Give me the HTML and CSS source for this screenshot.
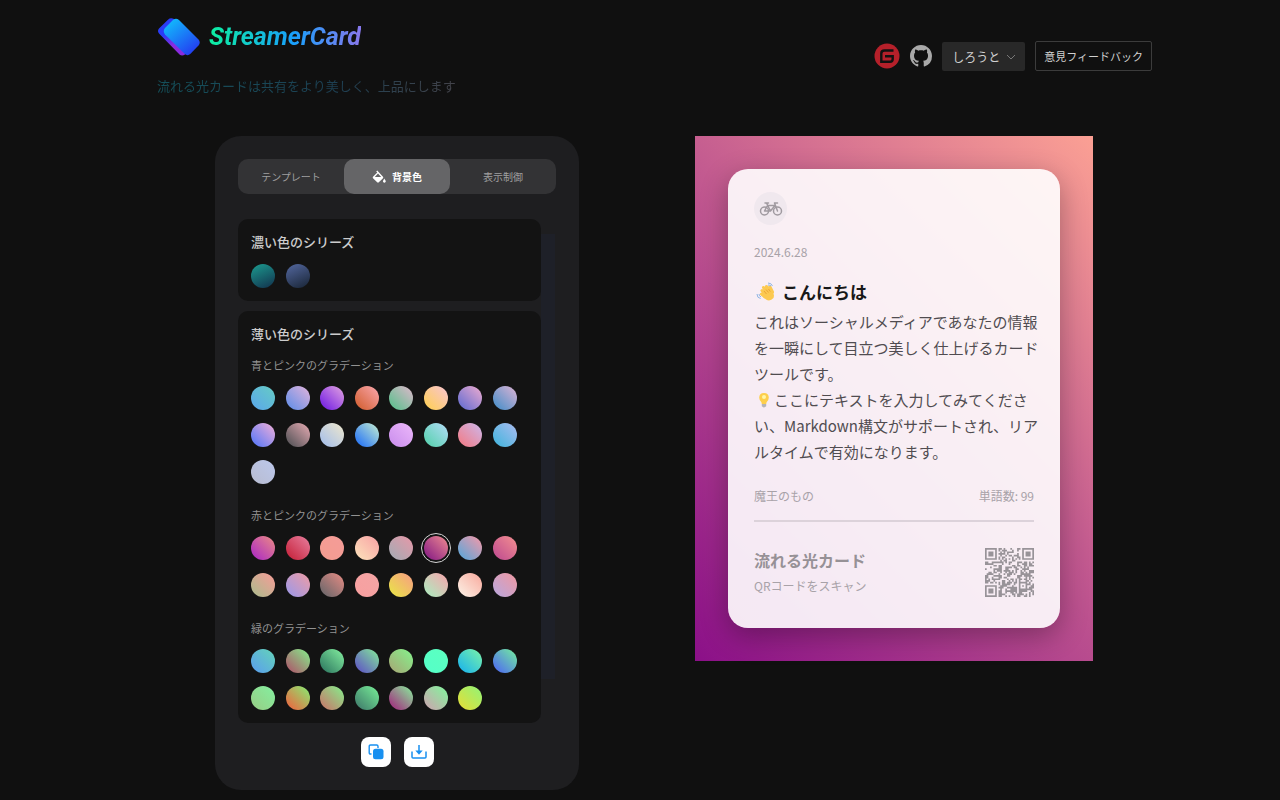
FILE: index.html
```html
<!DOCTYPE html>
<html lang="ja">
<head>
    <meta charset="UTF-8">
    <meta name="viewport" content="width=device-width, initial-scale=1.0">
    <title>StreamerCard</title>
    <link rel="stylesheet" href="styles.css">
</head>
<body>

    <header class="header">
        <div class="brand">
            <div class="brand-row">
                <svg class="logo" viewBox="0 0 44 40" aria-hidden="true">
                    <defs>
                        <linearGradient id="logo-front" x1="0.1" y1="0" x2="0.9" y2="1">
                            <stop offset="0.1" stop-color="#12b4fb"/>
                            <stop offset="0.9" stop-color="#2340f2"/>
                        </linearGradient>
                        <linearGradient id="logo-back" x1="0" y1="0" x2="0.8" y2="1">
                            <stop offset="0.35" stop-color="#2a3cf6"/>
                            <stop offset="0.65" stop-color="#8a2be0"/>
                        </linearGradient>
                    </defs>
                    <path d="M17 2 Q13.500 .3 11 2.800 L2 11.500 Q0 14 2 16.500 L22.500 37.500 Q25 39.500 28 37.500 L36 28 Z" fill="url(#logo-back)"/>
                    <path d="M16 3 Q19 .3 22 3 L41.500 22.500 Q44 25.500 41.500 28.500 L33.500 36.800 Q30.500 39.500 27.500 36.800 L8 17.500 Q5.500 14 8 11 Z" fill="url(#logo-front)"/>
                </svg>
                <h1 class="brand-name">StreamerCard</h1>
            </div>
            <p class="tagline">流れる光カードは共有をより美しく、上品にします</p>
        </div>
        <nav class="actions">
            <a class="icon-link" href="#" aria-label="Gitee">
                <svg viewBox="0 0 26 26" width="26" height="26">
                    <circle cx="13" cy="13" r="12.500" fill="#b5202a"/>
                    <path d="M19.500 7.500 H10.500 Q7.300 7.500 7.300 10.500 V18.700 H16 Q18.700 18.700 18.700 16 V13.200 H11" fill="none" stroke="#111" stroke-width="2.400"/>
                </svg>
            </a>
            <a class="icon-link" href="#" aria-label="GitHub">
                <svg viewBox="0 0 16 16" width="22" height="22">
                    <path fill="#a9a9a9" d="M8 0C3.580 0 0 3.580 0 8c0 3.540 2.290 6.530 5.470 7.590.4.070.55-.17.55-.38 0-.19-.01-.82-.01-1.490-2.010.37-2.530-.49-2.690-.94-.09-.23-.48-.94-.82-1.130-.28-.15-.68-.52-.01-.53.63-.01 1.080.58 1.230.82.72 1.210 1.870.87 2.330.66.070-.52.28-.87.51-1.070-1.780-.2-3.640-.89-3.640-3.950 0-.87.31-1.590.82-2.150-.08-.2-.36-1.020.080-2.120 0 0 .67-.21 2.200.82.64-.18 1.320-.27 2-.27s1.360.090 2 .27c1.530-1.040 2.200-.82 2.200-.82.44 1.100.16 1.920.080 2.120.51.56.82 1.270.82 2.150 0 3.070-1.870 3.750-3.650 3.950.29.25.54.73.54 1.480 0 1.070-.01 1.930-.01 2.200 0 .21.15.46.55.38A8.010 8.010 0 0 0 16 8c0-4.420-3.580-8-8-8z"/>
                </svg>
            </a>
            <div class="select-wrap">
                <select class="select" aria-label="モード">
                    <option>しろうと</option>
                </select>
                <svg class="chevron" viewBox="0 0 10 10" aria-hidden="true"><path d="M1 3 L5 7 L9 3" fill="none" stroke="#777" stroke-width="1"/></svg>
            </div>
            <button class="feedback" type="button">意見フィードバック</button>
        </nav>
    </header>

    <main class="main">
        <section class="panel">
            <div class="tabs" role="tablist">
                <button class="tab" type="button" role="tab">テンプレート</button>
                <button class="tab active" type="button" role="tab" aria-selected="true">
                    <svg viewBox="0 0 14 14" width="14" height="14" aria-hidden="true">
                        <path fill="#fff" fill-rule="evenodd" d="M5.200 0.500 L11 6.800 Q11.600 7.500 11 8.200 L6.800 12.300 Q6 13 5.200 12.300 L1 8.200 Q.4 7.500 1 6.800 L5.300 2.500 L4.200 1.400 Z M6 3.600 L2.800 6.900 H9.200 Z"/>
                        <path fill="#fff" d="M12.300 8.500 Q14 11 13.700 11.800 Q12.400 13.500 11 11.800 Q10.700 11 12.300 8.500Z"/>
                    </svg>
                    背景色
                </button>
                <button class="tab" type="button" role="tab">表示制御</button>
            </div>

            <div class="scroll-area">
                <div class="series-list">
                    <div class="series">
                        <h2 class="series-title">濃い色のシリーズ</h2>
                        <div class="swatches" data-set="dark"></div>
                    </div>
                    <div class="series">
                        <h2 class="series-title">薄い色のシリーズ</h2>
                        <h3 class="series-sub">青とピンクのグラデーション</h3>
                        <div class="swatches" data-set="blue"></div>
                        <h3 class="series-sub">赤とピンクのグラデーション</h3>
                        <div class="swatches" data-set="red"></div>
                        <h3 class="series-sub">緑のグラデーション</h3>
                        <div class="swatches" data-set="green"></div>
                    </div>
                </div>
                <div class="scrollbar" aria-hidden="true"><div class="thumb"></div></div>
            </div>

            <div class="tools">
                <button class="tool" type="button" aria-label="コピー">
                    <svg viewBox="0 0 16 16" width="16" height="16">
                        <path d="M3.500 10 H2.500 Q1.200 10 1.200 8.700 V2.300 Q1.200 1 2.500 1 H8.700 Q10 1 10 2.300 V4" fill="none" stroke="#1890f0" stroke-width="1.400"/>
                        <rect x="5" y="4.800" width="10.500" height="10.500" rx="2.500" fill="#1890f0"/>
                    </svg>
                </button>
                <button class="tool" type="button" aria-label="ダウンロード">
                    <svg viewBox="0 0 16 16" width="16" height="16">
                        <path d="M1 7.500 V13 Q1 14 2 14 H14 Q15 14 15 13 V7.500 M8 1 V7" fill="none" stroke="#1890f0" stroke-width="1.500"/>
                        <path d="M4.300 6.500 H11.700 L8 10.800 Z" fill="#1890f0"/>
                    </svg>
                </button>
            </div>
        </section>

        <section class="preview">
            <article class="card">
                <div class="avatar">
                    <svg viewBox="0 0 24 16" width="24" height="16" aria-hidden="true">
                        <g fill="none" stroke="#a09aa0" stroke-width="1.500" stroke-linecap="round" stroke-linejoin="round">
                            <circle cx="5.500" cy="10" r="4"/>
                            <circle cx="18.500" cy="10" r="4"/>
                            <path d="M5.500 10 L8.500 4.500 H16 L11.500 10 Z M11.500 10 L7.500 2 M6 2 H9.500 M18.500 10 L15.500 2 H18.500"/>
                        </g>
                    </svg>
                </div>
                <time class="date">2024.6.28</time>
                <h2 class="card-title">
                    <svg class="emoji" viewBox="0 0 20 20" aria-hidden="true">
                        <g stroke="#fcc950" stroke-width="3" stroke-linecap="round">
                            <path d="M6 8.500 L11 14 M7.500 5.500 L13 12 M10.500 4.500 L15 10.500 M14 5 L16.500 10 M5.500 12 L9 15"/>
                        </g>
                        <path d="M7 11 L15.500 6.500 Q19 12 17.500 16 Q14 20 10 17.500 L5.500 13Z" fill="#fcc950"/>
                        <path d="M8 9 L10.500 12 M10 7.500 L12.500 10.500 M12.500 7 L14.300 9.500" stroke="#e69a35" stroke-width=".8"/>
                        <path d="M1 12 Q1 16 4.500 16.500 M3 12 Q3 14 5 15 M12 1 Q15.500 1 16.500 4 M12 3 Q14 3 15 4" fill="none" stroke="#8fb5e4" stroke-width="1"/>
                    </svg>
                    こんにちは
                </h2>
                <div class="card-text">
                    <p>これはソーシャルメディアであなたの情報を一瞬にして目立つ美しく仕上げるカードツールです。</p>
                    <p><svg class="emoji" viewBox="0 0 20 20" aria-hidden="true">
                        <path d="M10 3 Q14.800 3 14.800 7.700 Q14.800 10 12.600 12.300 L12.200 14 H7.800 L7.400 12.300 Q5.200 10 5.200 7.700 Q5.200 3 10 3Z" fill="#fdcf4c"/>
                        <circle cx="10" cy="7" r="2" fill="#fff6a8"/>
                        <path d="M7.800 14 H12.200 V16.300 Q10 18.500 7.800 16.300Z" fill="#b4b4b8"/>
                    </svg>ここにテキストを入力してみてください、Markdown構文がサポートされ、リアルタイムで有効になります。</p>
                </div>
                <div class="meta">
                    <span>魔王のもの</span>
                    <span>単語数: 99</span>
                </div>
                <footer class="card-footer">
                    <div>
                        <h3 class="footer-title">流れる光カード</h3>
                        <p class="footer-note">QRコードをスキャン</p>
                    </div>
                    <svg class="qr" viewBox="0 0 29 29" role="img" aria-label="QRコード"><path id="qr-path" fill="#989398"/></svg>
                </footer>
            </article>
        </section>
    </main>

    <script src="script.js"></script>
</body>
</html>
```

FILE: styles.css
```css
* {
    box-sizing: border-box;
}

body {
    margin: 0;
    min-height: 100vh;
    background: #101010;
    color: #ccc;
    font-family: "Noto Sans CJK JP", sans-serif;
}

h1, h2, h3, p {
    margin: 0;
}

button, select {
    font-family: inherit;
    cursor: pointer;
}

/* Header */
.header {
    display: flex;
    justify-content: space-between;
    align-items: center;
    padding: 16px 10% 0;
}

.brand {
    padding-left: 29px;
}

.brand-row {
    display: flex;
    align-items: center;
    gap: 8px;
    height: 42px;
}

.logo {
    width: 44px;
    height: 40px;
}

.brand-name {
    font-family: "Liberation Sans Narrow", Roboto, sans-serif;
    font-size: 25px;
    font-style: italic;
    font-weight: 700;
    line-height: 42px;
    color: transparent;
    background: linear-gradient(90deg, #0df0a0, #18a0fb 55%, #8878ec);
    -webkit-background-clip: text;
    background-clip: text;
}

.tagline {
    margin-top: 18px;
    font-size: 13px;
    line-height: 20px;
    color: transparent;
    background: linear-gradient(90deg, #14505a, #1d3f52 60%, #43434a);
    -webkit-background-clip: text;
    background-clip: text;
}

.actions {
    display: flex;
    align-items: center;
    gap: 10px;
}

.icon-link {
    display: flex;
}

.select-wrap {
    position: relative;
    display: flex;
}

.select {
    appearance: none;
    width: 83px;
    height: 29px;
    padding: 0 10px;
    border: 0;
    border-radius: 2px;
    background: #282828;
    color: #d0d0d0;
    font-size: 12px;
}

.chevron {
    position: absolute;
    top: 10px;
    right: 9px;
    width: 10px;
    height: 10px;
    pointer-events: none;
}

.feedback {
    height: 30px;
    padding: 0 8px;
    border: 1px solid #3c3c3c;
    border-radius: 2px;
    background: #101010;
    color: #d0d0d0;
    font-size: 11px;
}

/* Main */
.main {
    display: flex;
    justify-content: center;
    align-items: flex-start;
    gap: 116px;
    padding: 40px 100px 10px 128px;
}

.panel {
    width: 364px;
    padding: 23px;
    border-radius: 26px;
    background: #1e1e20;
}

.tabs {
    display: flex;
    border-radius: 10px;
    background: #333335;
}

.tab {
    display: flex;
    flex: 1;
    justify-content: center;
    align-items: center;
    gap: 6px;
    height: 35px;
    padding: 0;
    border: 0;
    border-radius: 10px;
    background: none;
    color: #a0a0a0;
    font-size: 10px;
}

.tab.active {
    background: #656567;
    color: #fff;
    font-weight: 700;
}

.scroll-area {
    display: flex;
    margin-top: 25px;
}

.series-list {
    flex: 1;
}

.series {
    padding: 13px;
    border-radius: 10px;
    background: #131313;
}

.series + .series {
    margin-top: 10px;
}

.series-title {
    color: #ccc;
    font-size: 13px;
    font-weight: 500;
    line-height: 20px;
}

.series-sub {
    margin: 23px 0 13px;
    color: #929292;
    font-size: 11px;
    font-weight: 400;
    line-height: 16px;
}

.series-title + .series-sub {
    margin-top: 13px;
}

.swatches {
    display: grid;
    grid-template-columns: repeat(8, 24px);
    justify-content: space-between;
    row-gap: 13px;
    padding-right: 11px;
}

.series-title + .swatches {
    margin-top: 12px;
}

.swatch {
    width: 24px;
    height: 24px;
    padding: 0;
    border: 0;
    border-radius: 50%;
}

.swatch.selected {
    outline: 1px solid #d4d4d4;
    outline-offset: 2px;
}

.scrollbar {
    width: 15px;
    padding: 15px 1px 44px 0;
}

.thumb {
    height: 100%;
    background: #1e2028;
}

.tools {
    display: flex;
    justify-content: center;
    gap: 13px;
    margin-top: 14px;
}

.tool {
    display: flex;
    justify-content: center;
    align-items: center;
    width: 30px;
    height: 30px;
    padding: 0;
    border: 0;
    border-radius: 8px;
    background: #fff;
}

/* Card preview */
.preview {
    width: 398px;
    padding: 33px;
    background: linear-gradient(45deg, #8b1088, #c45c90 55%, #fba094);
}

.card {
    padding: 23px 26px 30px;
    border-radius: 20px;
    background: rgba(255, 255, 255, 0.9);
    box-shadow: 0 8px 28px rgba(0, 0, 0, 0.3);
}

.avatar {
    display: flex;
    justify-content: center;
    align-items: center;
    width: 33px;
    height: 33px;
    border-radius: 50%;
    background: #f0e8ee;
}

.date {
    display: block;
    margin-top: 17px;
    color: #a8a2a8;
    font-size: 12px;
    line-height: 20px;
}

.card-title {
    display: flex;
    align-items: center;
    gap: 6px;
    margin-top: 17px;
    padding-left: 2px;
    color: #181818;
    font-size: 17px;
    font-weight: 700;
    line-height: 26px;
}

.emoji {
    width: 20px;
    height: 20px;
}

/* The body copy runs a little wider than the rows under it */
.card-text {
    margin: 4px -8px 0 0;
    color: #504c50;
    font-size: 15px;
    line-height: 26px;
}

.card-text .emoji {
    vertical-align: -4px;
}

.meta {
    display: flex;
    justify-content: space-between;
    margin-top: 21px;
    padding-bottom: 14px;
    border-bottom: 2px solid #dcd2da;
    color: #a8a2a8;
    font-size: 12px;
    line-height: 20px;
}

.card-footer {
    display: flex;
    justify-content: space-between;
    align-items: center;
    margin-top: 24px;
}

.footer-title {
    color: #969196;
    font-size: 16px;
    font-weight: 700;
    line-height: 28px;
}

.footer-note {
    color: #a8a2a8;
    font-size: 12px;
    line-height: 24px;
}

.qr {
    width: 49px;
    height: 49px;
}
```

FILE: script.js
```js
// Gradient stops, from the bottom left to the top right
const palettes = {
    dark: [['#1c9c90', '#12304c'], ['#5468a0', '#182434']],
    blue: [
        ['#5aa6ec', '#66ccc4'], ['#5a8ce8', '#e4b4dc'], ['#6a14e4', '#e4a4e0'], ['#d05a28', '#faa8b0'],
        ['#50c088', '#e0b8cc'], ['#ffd04c', '#f8c4d4'], ['#5a68d0', '#f0acd0'], ['#3c8cc8', '#e0b4d4'],
        ['#4c74fa', '#f4b0d8'], ['#484c50', '#e8acb4'], ['#a0bcec', '#f0e8cc'], ['#1668fa', '#c8f0d0'],
        ['#c88cec', '#ecb8fa'], ['#50d0a8', '#b4dcf8'], ['#f47880', '#ccb8ec'], ['#3cb4dc', '#acbcf0'],
        ['#b8bcd0', '#bcc8ec']
    ],
    red: [
        ['#a824c8', '#ec8c84'], ['#c41c34', '#e880a0'], ['#f49c90', '#f49c98'], ['#fce4bc', '#f8a0a4'],
        ['#a0acb4', '#e898a8'], ['#801484', '#f08c90'], ['#50a8dc', '#f898a8'], ['#bc4890', '#f49090'],
        ['#a8bc8c', '#f89c98'], ['#9898ec', '#f09ca4'], ['#606468', '#e88c84'], ['#f8a0a0', '#f4a4a4'],
        ['#e8e844', '#f89c84'], ['#a8f0c0', '#f8a4ac'], ['#fcf4e8', '#f8a89c'], ['#b8a8e0', '#f098a0']
    ],
    green: [
        ['#5a9cf0', '#64d4b8'], ['#b04c68', '#84f08c'], ['#28705c', '#84f0a0'], ['#5c48c8', '#84ec98'],
        ['#a8a474', '#84f48c'], ['#54ffc8', '#5cffc0'], ['#14b0f0', '#7cf4a8'], ['#4c60f8', '#74f09c'],
        ['#98cc84', '#84f0a0'], ['#f45c3c', '#84f074'], ['#cc7068', '#84f08c'], ['#3c7468', '#78f098'],
        ['#a41c7c', '#88f09c'], ['#d0a0b0', '#80f89c'], ['#e8dc34', '#90f478']
    ]
};
const selected = { set: 'red', index: 5 };

document.querySelectorAll('.swatches').forEach(box => {
    const set = box.dataset.set;
    // The dark series runs from the top down instead
    const angle = set === 'dark' ? 155 : 45;
    palettes[set].forEach((stops, i) => {
        const button = document.createElement('button');
        button.type = 'button';
        button.className = 'swatch';
        button.setAttribute('aria-label', stops.join(' '));
        if (set === selected.set && i === selected.index) {
            button.classList.add('selected');
        }
        button.style.background = `linear-gradient(${angle}deg, ${stops[0]}, ${stops[1]})`;
        box.appendChild(button);
    });
});

// QR code, 29 x 29 modules
const size = 29;
let seed = 20240628;

function random() {
    seed = (seed * 1103515245 + 12345) % 2147483648;
    return seed / 2147483648;
}

// Rings of a finder or alignment pattern around a centre
function ring(x, y, cx, cy) {
    return Math.max(Math.abs(x - cx), Math.abs(y - cy));
}

function isDark(x, y) {
    const filled = random() < 0.5;
    for (const [cx, cy] of [[3, 3], [25, 3], [3, 25]]) {
        const r = ring(x, y, cx, cy);
        if (r <= 4) return r !== 2 && r !== 4;
    }
    const a = ring(x, y, 22, 22);
    if (a <= 2) return a !== 1;
    if (x === 6 || y === 6) return (x + y) % 2 === 0;
    return filled;
}

let d = '';
for (let y = 0; y < size; y++) {
    for (let x = 0; x < size; x++) {
        if (isDark(x, y)) d += `M${x} ${y}h1v1h-1z`;
    }
}
document.getElementById('qr-path').setAttribute('d', d);
```
